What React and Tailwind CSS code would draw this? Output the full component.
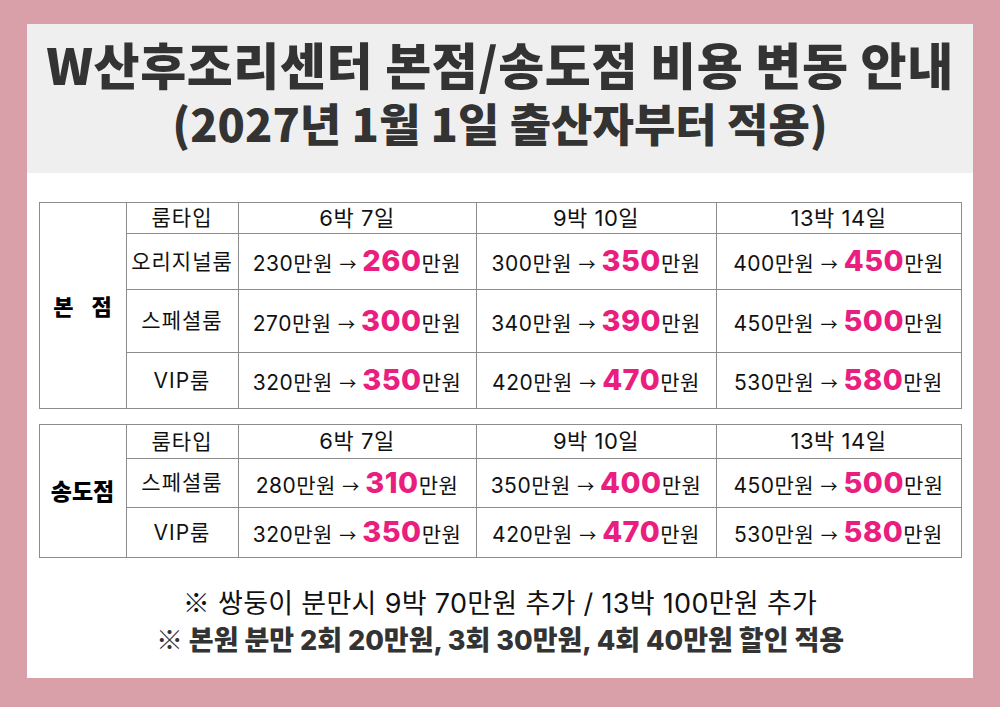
import React from "react";

const font = { fontFamily: '"Noto Sans CJK KR", "Noto Sans", sans-serif' };
const numFont = { fontFamily: 'Inter, "Noto Sans CJK KR", sans-serif' };
const cjk = { fontFamily: '"Noto Sans CJK KR", sans-serif' };

const mainRows = [
  { room: "오리지널룸", prices: [["230", "260"], ["300", "350"], ["400", "450"]], h: "h-[56px]" },
  { room: "스페셜룸", prices: [["270", "300"], ["340", "390"], ["450", "500"]], h: "h-[63px]" },
  { room: "VIP룸", prices: [["320", "350"], ["420", "470"], ["530", "580"]], h: "h-[56px]" },
];

const songdoRows = [
  { room: "스페셜룸", prices: [["280", "310"], ["350", "400"], ["450", "500"]], h: "h-[49px]" },
  { room: "VIP룸", prices: [["320", "350"], ["420", "470"], ["530", "580"]], h: "h-[50px]" },
];

const periods = ["6박 7일", "9박 10일", "13박 14일"];

function Price({ from, to }) {
  return (
    <span className="whitespace-nowrap" style={numFont}>
      <span className="text-[21px] tracking-[0.5px]">{from}만원 </span>
      <span className="text-[17px]" style={cjk}>→</span>
      <span className="text-[21px]"> </span>
      <span className="text-[29px] font-extrabold text-[#e91e7f] tracking-[0.5px]">{to}</span>
      <span className="text-[21px] tracking-[0.5px]">만원</span>
    </span>
  );
}

function PriceTable({ label, rows, headH }) {
  const cell = "border border-[#8c8c8c] text-center align-middle p-0 leading-[1.2]";
  return (
    <table className="w-[922px] border-collapse table-fixed text-[#111]">
      <colgroup>
        <col className="w-[87px]" />
        <col className="w-[112px]" />
        <col className="w-[238px]" />
        <col className="w-[240px]" />
        <col className="w-[245px]" />
      </colgroup>
      <tbody>
        <tr className={headH}>
          <td rowSpan={rows.length + 1} className={`${cell} text-black`}>
            {label}
          </td>
          <td className={`${cell} text-[21px] tracking-[1px]`} style={numFont}>룸타입</td>
          {periods.map((p) => (
            <td key={p} className={`${cell} text-[22px] tracking-[0.5px]`} style={numFont}>{p}</td>
          ))}
        </tr>
        {rows.map((r) => (
          <tr key={r.room} className={r.h}>
            <td className={`${cell} text-[21px] tracking-[1px]`} style={numFont}>{r.room}</td>
            {r.prices.map(([a, b]) => (
              <td key={a + b} className={cell}>
                <Price from={a} to={b} />
              </td>
            ))}
          </tr>
        ))}
      </tbody>
    </table>
  );
}

export default function App() {
  return (
    <div className="w-[1000px] h-[707px] bg-[#daa0aa] pt-[24px] px-[27px]" style={font}>
      <div className="w-[946px] h-[654px] bg-white flex flex-col">
        <div className="h-[149px] bg-[#efefef] flex flex-col items-center justify-center pb-[12px] text-[#333] font-black">
          <h1 className="text-[50px] leading-[60px] tracking-[0.6px] whitespace-nowrap">W산후조리센터 본점/송도점 비용 변동 안내</h1>
          <p className="text-[45px] leading-[60px] whitespace-nowrap">(2027년 1월 1일 출산자부터 적용)</p>
        </div>
        <div className="flex flex-col items-center pt-[29px]">
          <PriceTable
            label={
              <div className="flex justify-center gap-[18px] text-[22px] font-black">
                <span>본</span>
                <span>점</span>
              </div>
            }
            rows={mainRows}
            headH="h-[31px]"
          />
          <div className="h-[15px]" />
          <PriceTable
            label={<span className="text-[23px] font-black">송도점</span>}
            rows={songdoRows}
            headH="h-[34px]"
          />
          <div className="mt-[26px] flex flex-col items-center text-[27px] leading-[35px] whitespace-nowrap" style={numFont}>
            <p className="text-[#111] tracking-[0.3px]">
              <span style={cjk}>※</span> 쌍둥이 분만시 9박 70만원 추가 / 13박 100만원 추가
            </p>
            <p className="text-[#333] font-extrabold">
              <span style={cjk}>※</span> 본원 분만 2회 20만원, 3회 30만원, 4회 40만원 할인 적용
            </p>
          </div>
        </div>
      </div>
    </div>
  );
}
